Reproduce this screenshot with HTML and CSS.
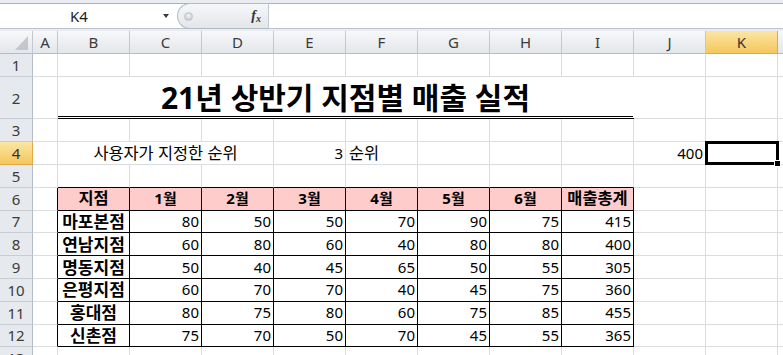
FILE: index.html
```html
<!DOCTYPE html>
<html lang="ko">
<head>
<meta charset="utf-8">
<title>21년 상반기 지점별 매출 실적</title>
<link rel="stylesheet" href="styles.css">
</head>
<body>
<div class="app">
  <div class="fbar">
    <div class="fbar-inner">
      <div class="namebox"><span class="ref">K4</span><span class="arrow"></span></div>
      <div class="fxbox"><span class="grip"></span><span class="fx"><i>f</i><i class="x">x</i></span></div>
      <div class="finput"></div>
    </div>
  </div>
  <div class="sheet">
    <!-- column headers -->
    <div class="corner"><span class="tri"></span></div>
    <div class="ch">A</div><div class="ch">B</div><div class="ch">C</div><div class="ch">D</div><div class="ch">E</div><div class="ch">F</div><div class="ch">G</div><div class="ch">H</div><div class="ch">I</div><div class="ch">J</div><div class="ch sel">K</div><div class="ch"></div>

    <!-- row 1 -->
    <div class="rh">1</div>
    <div class="c"></div><div class="c"></div><div class="c"></div><div class="c"></div><div class="c"></div><div class="c"></div><div class="c"></div><div class="c"></div><div class="c"></div><div class="c"></div><div class="c"></div><div class="c"></div>

    <!-- row 2 -->
    <div class="rh">2</div>
    <div class="c"></div>
    <div class="c title">21년 상반기 지점별 매출 실적</div>
    <div class="c"></div><div class="c"></div><div class="c"></div>

    <!-- row 3 -->
    <div class="rh">3</div>
    <div class="c"></div><div class="c"></div><div class="c"></div><div class="c"></div><div class="c"></div><div class="c"></div><div class="c"></div><div class="c"></div><div class="c"></div><div class="c"></div><div class="c"></div><div class="c"></div>

    <!-- row 4 -->
    <div class="rh sel">4</div>
    <div class="c"></div>
    <div class="c span3 mid ko">사용자가 지정한 순위</div>
    <div class="c num">3</div>
    <div class="c lft ko">순위</div>
    <div class="c"></div><div class="c"></div><div class="c"></div>
    <div class="c num">400</div>
    <div class="c active"><span class="selbox"><span class="handle"></span></span></div>
    <div class="c"></div>

    <!-- row 5 -->
    <div class="rh">5</div>
    <div class="c"></div>
    <div class="c ttop"></div><div class="c ttop"></div><div class="c ttop"></div><div class="c ttop"></div><div class="c ttop"></div><div class="c ttop"></div><div class="c ttop"></div><div class="c ttop"></div>
    <div class="c"></div><div class="c"></div><div class="c"></div>

    <!-- row 6 -->
    <div class="rh">6</div>
    <div class="c tleft"></div>
    <div class="c t th ko">지점</div><div class="c t th">1월</div><div class="c t th">2월</div><div class="c t th">3월</div><div class="c t th">4월</div><div class="c t th">5월</div><div class="c t th">6월</div><div class="c t th ko">매출총계</div>
    <div class="c"></div><div class="c"></div><div class="c"></div>

    <!-- row 7 -->
    <div class="rh">7</div>
    <div class="c tleft"></div>
    <div class="c t name">마포본점</div><div class="c t num">80</div><div class="c t num">50</div><div class="c t num">50</div><div class="c t num">70</div><div class="c t num">90</div><div class="c t num">75</div><div class="c t num">415</div>
    <div class="c"></div><div class="c"></div><div class="c"></div>

    <!-- row 8 -->
    <div class="rh">8</div>
    <div class="c tleft"></div>
    <div class="c t name">연남지점</div><div class="c t num">60</div><div class="c t num">80</div><div class="c t num">60</div><div class="c t num">40</div><div class="c t num">80</div><div class="c t num">80</div><div class="c t num">400</div>
    <div class="c"></div><div class="c"></div><div class="c"></div>

    <!-- row 9 -->
    <div class="rh">9</div>
    <div class="c tleft"></div>
    <div class="c t name">명동지점</div><div class="c t num">50</div><div class="c t num">40</div><div class="c t num">45</div><div class="c t num">65</div><div class="c t num">50</div><div class="c t num">55</div><div class="c t num">305</div>
    <div class="c"></div><div class="c"></div><div class="c"></div>

    <!-- row 10 -->
    <div class="rh">10</div>
    <div class="c tleft"></div>
    <div class="c t name">은평지점</div><div class="c t num">60</div><div class="c t num">70</div><div class="c t num">70</div><div class="c t num">40</div><div class="c t num">45</div><div class="c t num">75</div><div class="c t num">360</div>
    <div class="c"></div><div class="c"></div><div class="c"></div>

    <!-- row 11 -->
    <div class="rh">11</div>
    <div class="c tleft"></div>
    <div class="c t name">홍대점</div><div class="c t num">80</div><div class="c t num">75</div><div class="c t num">80</div><div class="c t num">60</div><div class="c t num">75</div><div class="c t num">85</div><div class="c t num">455</div>
    <div class="c"></div><div class="c"></div><div class="c"></div>

    <!-- row 12 -->
    <div class="rh">12</div>
    <div class="c tleft"></div>
    <div class="c t name">신촌점</div><div class="c t num">75</div><div class="c t num">70</div><div class="c t num">50</div><div class="c t num">70</div><div class="c t num">45</div><div class="c t num">55</div><div class="c t num">365</div>
    <div class="c"></div><div class="c"></div><div class="c"></div>

    <!-- row 13 -->
    <div class="rh">13</div>
    <div class="c"></div><div class="c"></div><div class="c"></div><div class="c"></div><div class="c"></div><div class="c"></div><div class="c"></div><div class="c"></div><div class="c"></div><div class="c"></div><div class="c"></div><div class="c"></div>
  </div>
</div>
</body>
</html>
```

FILE: styles.css
```css
* {
  box-sizing: border-box;
  margin: 0;
  padding: 0;
}

html,
body {
  width: 783px;
  height: 355px;
  overflow: hidden;
  background: #ffffff;
  font-family: "Noto Sans", "Noto Sans CJK KR", sans-serif;
  color: #000000;
}

.app {
  display: flex;
  flex-direction: column;
  width: 783px;
}

/* ---------- formula bar ---------- */
.fbar {
  height: 31px;
  background: #e9ecf0;
  padding: 3px 0 2px;
}

.fbar-inner {
  display: flex;
  height: 26px;
  background: #ffffff;
  border-top: 1px solid #a9b1ba;
  border-bottom: 1px solid #bcc3cb;
}

.namebox {
  width: 177px;
  display: flex;
  align-items: center;
  padding-left: 70px;
  font-size: 15px;
  color: #1e1e1e;
}

.arrow {
  margin-left: auto;
  margin-right: 8px;
  width: 0;
  height: 0;
  border-left: 3.5px solid transparent;
  border-right: 3.5px solid transparent;
  border-top: 4px solid #3a3a3a;
}

.fxbox {
  width: 92px;
  display: flex;
  align-items: center;
  background: linear-gradient(#f6f7f9, #e3e6ea);
  border: 1px solid #b3bac3;
  border-right: 1px solid #c3c9d0;
  border-radius: 13px 0 0 13px;
  margin: -1px 0;
  padding-left: 6px;
}

.grip {
  width: 9px;
  height: 9px;
  border-radius: 50%;
  background: radial-gradient(circle at 50% 40%, #f4f5f6 0, #c9cdd3 70%);
  border: 1px solid #c0c5cc;
}

.fx {
  margin-left: auto;
  margin-right: 7px;
  font-family: "Liberation Serif", serif;
  font-weight: bold;
  font-size: 14px;
  color: #333333;
  line-height: 1;
}

.fx .x {
  font-size: 10px;
  position: relative;
  top: 2px;
}

.finput {
  flex: 1;
  background: #ffffff;
}

/* ---------- sheet grid ---------- */
.sheet {
  display: grid;
  width: max-content;
  grid-template-columns: 33px 25px repeat(11, 72px);
  grid-template-rows: 23px 22.8px 42.6px repeat(11, 22.8px);
}

.corner,
.ch,
.rh {
  background: linear-gradient(#f7f8fa, #e3e6ea);
  border-right: 1px solid #c3c8cf;
  border-bottom: 1px solid #b4bcc6;
  color: #3b3b3b;
  font-size: 15px;
  display: flex;
  align-items: center;
  justify-content: center;
}

.rh {
  background: #e6e9ed;
  border-bottom: 1px solid #c8cdd3;
  border-right: 1px solid #b4bcc6;
}

.corner {
  justify-content: flex-end;
  align-items: flex-end;
  padding: 0 4px 3px 0;
}

.tri {
  width: 13px;
  height: 14px;
  background: #c4c8ce;
  clip-path: polygon(100% 0, 100% 100%, 0 100%);
}

.ch.sel,
.rh.sel {
  background: linear-gradient(#fbe6a3, #f5c65d);
  border-right-color: #e1aa48;
  border-bottom-color: #e1aa48;
  color: #333333;
}

.c {
  border-right: 1px solid #dadcdd;
  border-bottom: 1px solid #dadcdd;
  display: flex;
  align-items: center;
  font-size: 15px;
  white-space: nowrap;
  min-width: 0;
  line-height: 1;
}

.ko {
  font-size: 16.4px;
}

.title {
  grid-column: span 8;
  justify-content: center;
  align-items: flex-end;
  padding-bottom: 3px;
  font-size: 30px;
  font-weight: bold;
  border-right-color: transparent;
  border-bottom: 3px double #000000;
}

.span3 {
  grid-column: span 3;
}

.mid {
  justify-content: center;
}

.num {
  justify-content: flex-end;
  padding-right: 2px;
}

.lft {
  justify-content: flex-start;
  padding-left: 3px;
}

/* table borders */
.ttop {
  border-bottom-color: #000000;
}

.tleft {
  border-right-color: #000000;
}

.t {
  border-right-color: #000000;
  border-bottom-color: #000000;
}

.th {
  background: #ffcccc;
  font-weight: bold;
  justify-content: center;
}

.name {
  font-weight: bold;
  font-size: 17px;
  justify-content: center;
}

/* active cell */
.active {
  position: relative;
}

.selbox {
  position: absolute;
  left: -1px;
  top: -1px;
  width: 74px;
  height: 24px;
  border: 3px solid #000000;
  z-index: 2;
}

.handle {
  position: absolute;
  right: -5px;
  bottom: -5px;
  width: 7px;
  height: 7px;
  background: #000000;
  border: 1px solid #ffffff;
}
```
